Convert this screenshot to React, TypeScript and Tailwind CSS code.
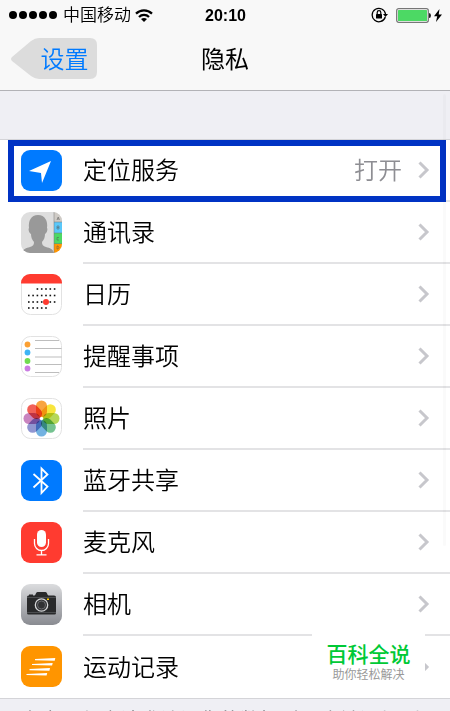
import React from "react";

const petals: [number, string][] = [
  [0, "#f7941d"],
  [45, "#f7e11b"],
  [90, "#a8d03c"],
  [135, "#5cb87c"],
  [180, "#5aa5dc"],
  [225, "#7d83c9"],
  [270, "#c06fb5"],
  [315, "#f0453a"],
];

function LocationIcon() {
  return (
    <svg viewBox="0 0 41 41" className="size-full">
      <rect width="41" height="41" rx="9" fill="#007aff" />
      <path d="M30 11 8 21l12 2 1 10z" fill="#fff" />
    </svg>
  );
}

function ContactsIcon() {
  return (
    <svg viewBox="0 0 41 41" className="size-full">
      <defs>
        <clipPath id="contacts-clip">
          <rect width="41" height="41" rx="9" />
        </clipPath>
      </defs>
      <g clipPath="url(#contacts-clip)">
        <rect width="41" height="41" fill="#dedede" />
        <path
          d="M1 41c1-4 4-5 8-6 3-1 4-2 4-5-2-2-3-5-3-8-2-1-3-5-2-6-1-7 2-13 9-13s10 6 9 13c1 1 0 5-2 6 0 3-1 6-3 8 0 3 1 4 4 5 4 1 7 2 8 6z"
          fill="#999"
        />
        <rect x="33" width="8" height="10" fill="#cfcbc6" />
        <rect x="33" y="10" width="8" height="11" fill="#5ac8fa" />
        <rect x="33" y="21" width="8" height="11" fill="#4cd964" />
        <rect x="33" y="32" width="8" height="9" fill="#ff9500" />
        <path d="M33 0v41M33 10h8M33 21h8M33 31.500h8" stroke="#777" strokeWidth=".5" />
        <g fill="none" stroke="#555" strokeWidth=".7" opacity=".7">
          <path d="m36 8 1.200-3L38.500 8M36.400 7h1.600M36 14v3h2v-3zM36 15.500h2M38 25.500h-2v2.500h2M36 34v3h1l1-1.500-1-1.500z" />
        </g>
      </g>
    </svg>
  );
}

function CalendarIcon() {
  const rows = [
    { y: 15, from: 2, to: 6 },
    { y: 21.5, from: 0, to: 6 },
    { y: 28, from: 0, to: 6 },
    { y: 34, from: 0, to: 4 },
  ];
  return (
    <svg viewBox="0 0 41 41" className="size-full">
      <rect x=".5" y=".5" width="40" height="40" rx="9" fill="#fff" stroke="#e2e2e2" />
      <path d="M0 9.500V9a9 9 0 0 1 9-9h23a9 9 0 0 1 9 9v.5z" fill="#ff3b30" />
      {rows.map((r) =>
        Array.from({ length: r.to - r.from + 1 }, (_, i) => (
          <rect key={`${r.y}-${i}`} x={7 + (r.from + i) * 4.3} y={r.y - 0.8} width="1.600" height="1.600" fill="#111" />
        )),
      )}
      <circle cx="25" cy="28" r="3" fill="#ff3b30" />
    </svg>
  );
}

function RemindersIcon() {
  return (
    <svg viewBox="0 0 41 41" className="size-full">
      <rect x=".5" y=".5" width="40" height="40" rx="9" fill="#fff" stroke="#e2e2e2" />
      <path d="M14 4.500h24M14 12.500h26.500M14 21h26.500M14 28.500h26.500M14 36.500h24" stroke="#b5b5b5" strokeWidth=".9" />
      <circle cx="6.500" cy="8.500" r="2.900" fill="#fba033" />
      <circle cx="6.500" cy="16.500" r="2.900" fill="#3eb4f5" />
      <circle cx="6.500" cy="25" r="2.900" fill="#70dc50" />
      <circle cx="6.500" cy="32.500" r="2.900" fill="#cb7ce3" />
    </svg>
  );
}

function PhotosIcon() {
  return (
    <svg viewBox="0 0 41 41" className="size-full">
      <rect x=".5" y=".5" width="40" height="40" rx="9" fill="#fff" stroke="#e2e2e2" />
      <g className="isolate">
        {petals.map(([angle, color]) => (
          <rect
            key={angle}
            x="15"
            y="2.500"
            width="11"
            height="16.500"
            rx="5.500"
            fill={color}
            opacity=".85"
            className="mix-blend-multiply"
            transform={`rotate(${angle} 20.5 20.5)`}
          />
        ))}
      </g>
      <circle cx="20.500" cy="20.500" r="1.200" fill="#fff" />
    </svg>
  );
}

function BluetoothIcon() {
  return (
    <svg viewBox="0 0 41 41" className="size-full">
      <rect width="41" height="41" rx="9" fill="#007aff" />
      <path d="m12.500 14 14 12.500-6 6.500V8.500l6 6L12.500 27.500" fill="none" stroke="#fff" strokeWidth="1.800" />
    </svg>
  );
}

function MicrophoneIcon() {
  return (
    <svg viewBox="0 0 41 41" className="size-full">
      <rect width="41" height="41" rx="9" fill="#ff3b30" />
      <rect x="16" y="8" width="9" height="17" rx="4.500" fill="#fff" />
      <path d="M13.500 17v4.500a7 7 0 0 0 14 0V17M20.500 28.500v4M15.500 32.800h10" fill="none" stroke="#fff" strokeWidth="1.300" />
    </svg>
  );
}

function CameraIcon() {
  return (
    <svg viewBox="0 0 41 41" className="size-full">
      <defs>
        <linearGradient id="camera-bg" x1="0" y1="0" x2="0" y2="1">
          <stop stopColor="#dbdcde" />
          <stop offset="1" stopColor="#898b91" />
        </linearGradient>
      </defs>
      <rect width="41" height="41" rx="9" fill="url(#camera-bg)" />
      <path d="M6 13q0-1.500 1.500-1.500H8v-1h4v1h1.500c1 0 1.500-3.500 3-3.500h8c1.500 0 2 3.500 3 3.500h5.500q2 0 2 1.500v16q0 1.500-1.500 1.500h-26Q6 30.500 6 29z" fill="#292a2b" />
      <path d="M6 13.500h29M6 28.500h29" stroke="#65676a" strokeWidth=".6" />
      <circle cx="20.500" cy="21" r="6.200" fill="#303133" stroke="#d5d6d8" strokeWidth="1.300" />
      <circle cx="20.500" cy="21" r="4" fill="none" stroke="#77797c" strokeWidth=".8" />
      <rect x="26" y="14.500" width="2" height="1.500" fill="#ffcc00" />
    </svg>
  );
}

function MotionIcon() {
  return (
    <svg viewBox="0 0 41 41" className="size-full">
      <rect width="41" height="41" rx="9" fill="#ff9500" />
      <path
        d="m14 13 20.300-1-.6 2.700-19.700-.5zM11 18l20.700-1-.6 2.600-20.100-.5zM8.500 23l20.500-1-.6 2.800-19.900-.6zM5.500 28l20.700-1-.6 2.600-20.100-.5z"
        fill="#fff"
      />
    </svg>
  );
}

function Chevron() {
  return (
    <svg viewBox="0 0 12 18" className="h-[18px] w-3 shrink-0" fill="none" stroke="#c7c7cc" strokeWidth="3">
      <path d="m1.500 1.500 7.500 7.500-7.500 7.500" />
    </svg>
  );
}

const items = [
  { label: "定位服务", value: "打开", Icon: LocationIcon },
  { label: "通讯录", Icon: ContactsIcon },
  { label: "日历", Icon: CalendarIcon },
  { label: "提醒事项", Icon: RemindersIcon },
  { label: "照片", Icon: PhotosIcon },
  { label: "蓝牙共享", Icon: BluetoothIcon },
  { label: "麦克风", Icon: MicrophoneIcon },
  { label: "相机", Icon: CameraIcon },
  { label: "运动记录", Icon: MotionIcon },
];

function StatusBar() {
  return (
    <div className="grid h-[30px] grid-cols-[1fr_auto_1fr] items-center pr-2 pl-[9px]">
      <div className="flex items-center">
        <svg viewBox="0 0 48 8" className="h-2 w-12 shrink-0">
          {[4, 14, 24, 34, 44].map((cx) => (
            <circle key={cx} cx={cx} cy="4" r="4" />
          ))}
        </svg>
        <span className="ml-1.5 pt-0.5 text-[17px] leading-5 font-[350] whitespace-nowrap">中国移动</span>
        <svg viewBox="0 0 18 13" className="ml-1 h-[13px] w-[18px] shrink-0" fill="none" stroke="#000" strokeWidth="2.200">
          <path d="M1 4.600a11.500 11.500 0 0 1 16 0M4 7.900a7 7 0 0 1 10 0" />
          <path d="M9 13 6 10q3-2.200 6 0z" fill="#000" stroke="none" />
        </svg>
      </div>
      <time className="pt-0.5 text-base leading-5 font-bold">20:10</time>
      <div className="flex items-center justify-end">
        <svg viewBox="0 0 17 16" className="h-4 w-[17px]">
          <path d="M14.300 10a6.700 6.700 0 1 1 .2-3" fill="none" stroke="#000" strokeWidth="1.300" />
          <path d="M12 7h5l-2.500 3z" />
          <rect x="5" y="7" width="6" height="4.500" rx=".5" />
          <path d="M6.200 7V5.500a1.800 1.800 0 0 1 3.600 0V7" fill="none" stroke="#000" strokeWidth="1.200" />
        </svg>
        <svg viewBox="0 0 36 15" className="ml-2 h-[15px] w-9">
          <rect x=".7" y=".7" width="31.600" height="13.600" rx="2" fill="#fff" stroke="#777" strokeWidth="1.300" />
          <rect x="2" y="2" width="29" height="11" rx=".5" fill="#4cd964" />
          <path d="M33 5q2 0 2 2.500T33 10z" fill="#222" />
        </svg>
        <svg viewBox="0 0 8 13" className="ml-0.5 h-[13px] w-2">
          <path d="M5.500 0 0 7.200h3.200L2 13l6-7.500H4.700z" />
        </svg>
      </div>
    </div>
  );
}

export default function App() {
  return (
    <div className="relative h-screen overflow-hidden bg-[#efeff4] font-['Liberation_Sans','Noto_Sans_CJK_SC',sans-serif] text-black">
      <header className="h-[91px] border-b border-[#b2b2b6] bg-[#f8f8f8]">
        <StatusBar />
        <div className="grid grid-cols-[1fr_auto_1fr] items-center px-[11px] pt-2">
          <button className="relative isolate h-[42px] w-[87px] pt-0.5 pl-5 text-2xl leading-8 font-[350] text-[#007aff]">
            <svg viewBox="0 0 87 42" className="absolute inset-0 -z-10 size-full">
              <path
                d="M1 19 20 3q4-3 8-3h51q7 0 7 7v27q0 7-7 7H28q-4 0-8-3L1 23q-2-2 0-4z"
                fill="#dcdcdc"
              />
            </svg>
            设置
          </button>
          <h1 className="pt-0.5 text-2xl leading-8 font-normal">隐私</h1>
        </div>
      </header>

      <main className="pt-12">
        <ul className="border-t border-[#d4d4d8] bg-white">
          {items.map(({ label, value, Icon }, i) => (
            <li key={label} className="relative">
              <a href="#" className="flex h-[62px] pl-[21px]">
                <span className="mt-[10px] size-[41px] shrink-0">
                  <Icon />
                </span>
                <span
                  className={
                    i === items.length - 1
                      ? "ml-[21px] flex flex-1 items-center pr-5"
                      : "ml-[21px] flex flex-1 items-center border-b-2 border-[#e3e3e5] pr-5"
                  }
                >
                  <span className="flex-1 pt-0.5 text-2xl leading-8 font-[350]">{label}</span>
                  {value && (
                    <span className="mr-4 pt-0.5 text-2xl leading-8 font-[350] text-[#8e8e93]">{value}</span>
                  )}
                  <Chevron />
                </span>
              </a>
              {i === 0 && (
                <div className="pointer-events-none absolute top-0 right-1 left-2 h-[62px] border-[6px] border-[#0033c4]" />
              )}
            </li>
          ))}
        </ul>
        <p className="border-t border-[#d4d4d8] px-5 pt-2 text-xl leading-7 whitespace-nowrap text-[#6d6d72]">
          当应用程序请求访问您的数据时，会被添加到
        </p>
      </main>

      <div className="pointer-events-none absolute top-[94px] right-1 h-[452px] w-[3px] rounded-full bg-black/2" />

      <aside className="absolute right-[25px] bottom-[18px] flex h-[66px] w-[113px] flex-col items-center justify-center bg-white pt-[5px]">
        <strong className="text-[21px] leading-6 font-medium text-[#00c936]">百科全说</strong>
        <span className="text-xs leading-4 text-[#999]">助你轻松解决</span>
      </aside>
    </div>
  );
}
